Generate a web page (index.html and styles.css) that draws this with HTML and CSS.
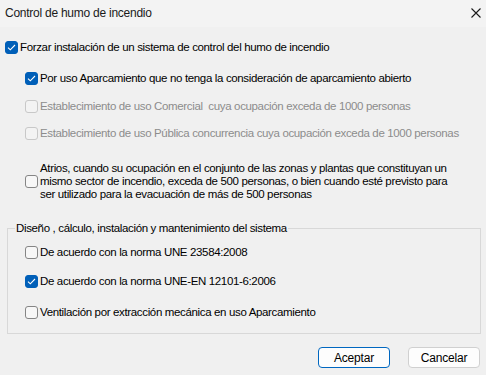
FILE: index.html
```html
<!DOCTYPE html>
<html lang="es">
<head>
    <meta charset="UTF-8">
    <title>Control de humo de incendio</title>
    <link rel="stylesheet" href="styles.css">
</head>
<body>
    <div class="dialog">
        <div class="titlebar">
            <span class="title">Control de humo de incendio</span>
            <svg class="close" width="10" height="10" viewBox="0 0 10 10"><path d="M0.5 0.5 L9.5 9.5 M9.5 0.5 L0.5 9.5" stroke="#1a1a1a" stroke-width="1.1"/></svg>
        </div>

        <div class="content">
            <label class="row first">
                <span class="box checked"><svg width="9" height="7" viewBox="0 0 9 7"><path d="M1 3.6 L3.3 5.8 L8 1" fill="none" stroke="#fff" stroke-width="1.1"/></svg></span>
                <span>Forzar instalación de un sistema de control del humo de incendio</span>
            </label>

            <label class="row sub r2">
                <span class="box checked"><svg width="9" height="7" viewBox="0 0 9 7"><path d="M1 3.6 L3.3 5.8 L8 1" fill="none" stroke="#fff" stroke-width="1.1"/></svg></span>
                <span>Por uso Aparcamiento que no tenga la consideración de aparcamiento abierto</span>
            </label>

            <label class="row sub r3 disabled">
                <span class="box"></span>
                <span>Establecimiento de uso Comercial&nbsp; cuya ocupación exceda de 1000 personas</span>
            </label>

            <label class="row sub r4 disabled">
                <span class="box"></span>
                <span>Establecimiento de uso Pública concurrencia cuya ocupación exceda de 1000 personas</span>
            </label>

            <label class="row sub multi">
                <span class="box"></span>
                <span>Atrios, cuando su ocupación en el conjunto de las zonas y plantas que constituyan un<br>mismo sector de incendio, exceda de 500 personas, o bien cuando esté previsto para<br>ser utilizado para la evacuación de más de 500 personas</span>
            </label>

            <fieldset class="group">
                <legend>Diseño , cálculo, instalación y mantenimiento del sistema</legend>
                <label class="row g1">
                    <span class="box"></span>
                    <span>De acuerdo con la norma UNE 23584:2008</span>
                </label>
                <label class="row g2">
                    <span class="box checked"><svg width="9" height="7" viewBox="0 0 9 7"><path d="M1 3.6 L3.3 5.8 L8 1" fill="none" stroke="#fff" stroke-width="1.1"/></svg></span>
                    <span>De acuerdo con la norma UNE-EN 12101-6:2006</span>
                </label>
                <label class="row g3">
                    <span class="box"></span>
                    <span>Ventilación por extracción mecánica en uso Aparcamiento</span>
                </label>
            </fieldset>

            <div class="buttons">
                <button class="btn default">Aceptar</button>
                <button class="btn">Cancelar</button>
            </div>
        </div>
    </div>
</body>
</html>
```

FILE: styles.css
```css
body {
    margin: 0;
    background-color: #f0f0f0;
    font-family: "Liberation Sans", Arial, sans-serif;
    font-size: 11.5px;
    letter-spacing: -0.35px;
    color: #000;
}
.dialog {
    width: 486px;
    height: 375px;
    overflow: hidden;
}
.titlebar {
    height: 27px;
    display: flex;
    align-items: center;
    justify-content: space-between;
    padding: 0 5px 1px 5px;
    box-sizing: border-box;
    background-color: #f3f3f3;
}
.title {
    font-size: 12px;
    letter-spacing: -0.25px;
    color: #1a1a1a;
}
.content {
    padding: 0 5px 0 5px;
}
.row {
    display: flex;
    align-items: center;
    height: 14px;
    line-height: 14px;
    gap: 2px;
    white-space: nowrap;
}
.row.first { margin-top: 13px; }
.row.sub { margin-left: 20px; }
.row.r2 { margin-top: 17px; }
.row.r3 { margin-top: 14px; }
.row.r4 { margin-top: 13px; }
.row.multi {
    margin-top: 22px;
    height: 39px;
    line-height: 13px;
}
.box {
    width: 13px;
    height: 13px;
    box-sizing: border-box;
    border: 1px solid #858585;
    border-radius: 3px;
    background-color: #f7f7f7;
    flex-shrink: 0;
    display: flex;
    align-items: center;
    justify-content: center;
}
.box.checked {
    background-color: #005fb8;
    border-color: #005fb8;
}
.disabled {
    color: #8c8c8c;
}
.disabled .box {
    border-color: #c8c8c8;
    background-color: #f3f3f3;
}
.group {
    margin: 20px 0 0 2px;
    width: 474px;
    box-sizing: border-box;
    border: 1px solid #d8d8d8;
    padding: 0 0 14px 17px;
}
.group legend {
    padding: 0 1px;
    margin-left: -10px;
    line-height: 14px;
}
.row.g1 { margin-top: 10px; }
.row.g2 { margin-top: 15px; }
.row.g3 { margin-top: 17px; }
.buttons {
    display: flex;
    justify-content: flex-end;
    gap: 18px;
    margin-top: 13px;
    padding-right: 1px;
}
.btn {
    width: 72px;
    height: 21px;
    box-sizing: border-box;
    font-family: inherit;
    font-size: 12px;
    letter-spacing: -0.2px;
    color: #000;
    background-color: #fdfdfd;
    border: 1px solid #d0d0d0;
    border-radius: 4px;
    padding: 0;
}
.btn.default {
    border-color: #0067c0;
}
```
